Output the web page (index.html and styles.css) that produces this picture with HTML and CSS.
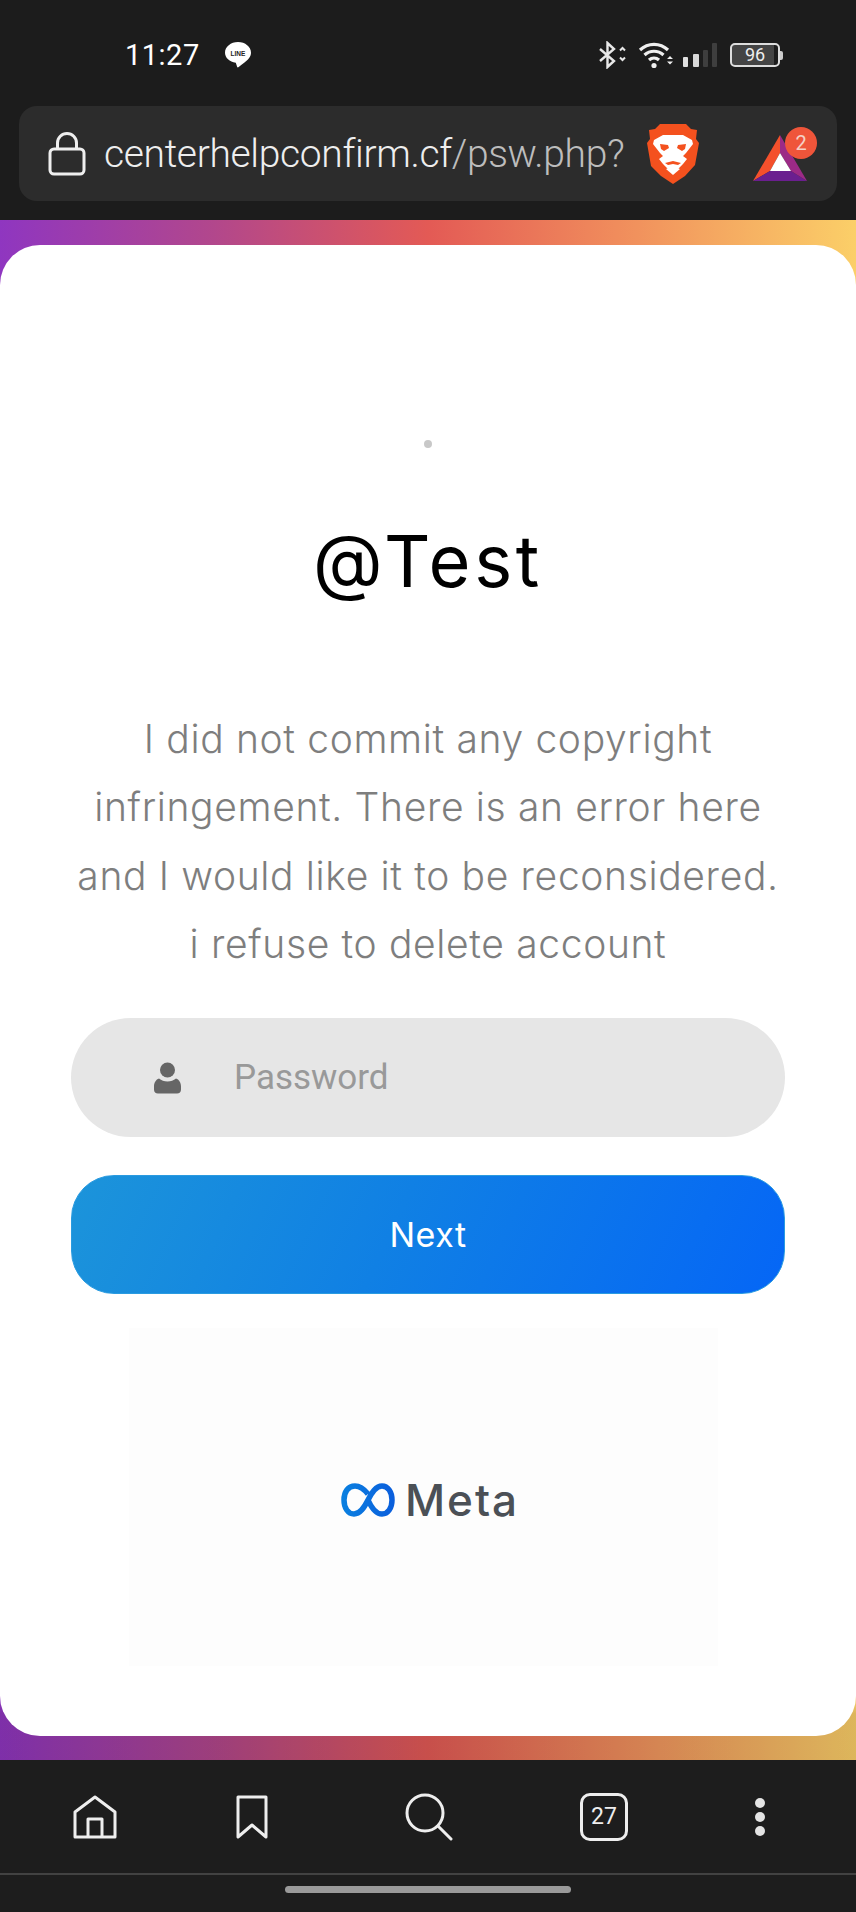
FILE: index.html
```html
<!doctype html>
<html lang="en">
<head>
    <meta charset="utf-8">
    <meta name="viewport" content="width=device-width, initial-scale=1">
    <title>@Test</title>
    <link rel="stylesheet" href="styles.css">
</head>
<body>

<div class="phone">
    <header class="topbar">
        <div class="status">
            <div class="status-left">
                <span class="clock">11:27</span>
                <svg class="line-icon" viewBox="0 0 28 28">
                    <path fill="#fff" d="M14 1C6.800 1 1 5.800 1 11.800c0 5 4.600 9.200 10.800 10l1.400 4.200c.3.600 1 .5 1.500 0 1.800-1.700 3.800-3 5.800-4.500 3.200-2.300 6.500-5.500 6.500-9.700C27 5.800 21.200 1 14 1z"/>
                    <text class="line-word" x="14" y="14.500" text-anchor="middle">LINE</text>
                </svg>
            </div>
            <div class="status-right">
                <svg class="bt-icon" viewBox="0 0 30 28" fill="none" stroke="#e8e8e8" stroke-width="2.400">
                    <path d="M2 8l14 12-6.500 6V2L16 8 2 20"/>
                    <path stroke-width="2" d="M22 10.500l2.500-2.500 2.500 2.500M22 17.500l2.500 2.500 2.500-2.500" transform="translate(0 -1)"/>
                </svg>
                <svg class="wifi-icon" viewBox="0 0 36 28" fill="none" stroke="#efefef" stroke-width="3.200">
                    <path d="M2 9c8-7.500 20-7.500 28 0"/>
                    <path d="M6.500 14c5.500-5 13.500-5 19 0"/>
                    <path d="M11 19c3-2.700 7-2.700 10 0"/>
                    <circle cx="16" cy="24.500" r="2.600" fill="#efefef" stroke="none"/>
                    <path fill="#efefef" stroke="none" d="M29 18h6l-3-3zM29 20.500h6l-3 3z"/>
                </svg>
                <svg class="signal-icon" viewBox="0 0 36 26">
                    <rect x="1" y="15" width="5" height="10" rx="1" fill="#e0e0e0"/>
                    <rect x="11" y="12" width="6" height="13" rx="1" fill="#d8d8d8"/>
                    <rect x="21" y="8" width="5" height="17" rx="1" fill="#3e3e3e"/>
                    <rect x="30" y="1" width="5" height="24" rx="1" fill="#3e3e3e"/>
                </svg>
                <div class="battery">
                    <span class="battery-body">96</span>
                    <span class="battery-tip"></span>
                </div>
            </div>
        </div>

        <div class="urlbar">
            <svg class="lock-icon" viewBox="0 0 38 44" fill="none" stroke="#efefef" stroke-width="3">
                <rect x="2" y="17" width="34" height="25" rx="4"/>
                <path d="M9.500 17v-6a9.500 9.500 0 0 1 19 0v6"/>
            </svg>
            <div class="url"><span class="url-host">centerhelpconfirm.cf</span><span class="url-path">/psw.php?</span></div>
            <svg class="brave-icon" viewBox="0 0 52 62">
                <path fill="#f4511e" d="M13 1h26l5 5 6 1-1 9 3 4-4 22-10 11-12 8-12-8L4 43 0 20l3-4-1-9 6-1z"/>
                <path fill="#fff" d="M7 17l9-5h20l9 5 1 4-7 9-3 3 4 3-4 5-6 6-4-3-4 3-6-6-4-5 4-3-3-3-7-9z"/>
                <path fill="#f4511e" d="M13 21l8 1 1 3-5 3-3-2zM39 21l-8 1-1 3 5 3 3-2z"/>
                <path fill="#f4511e" d="M18 40l8-2 8 2-3 2-5-1-5 1z"/>
                <path fill="#fff" d="M19 46l7-3 7 3-7 6z"/>
            </svg>
            <div class="bat">
                <svg class="bat-icon" viewBox="0 0 54 48">
                    <path fill="#f4502c" d="M0 48L27 2v18L17 38z"/>
                    <path fill="#6a1f8f" d="M0 48h54l-16-10H17z"/>
                    <path fill="#9c2a86" d="M27 2l27 46-16-10-11-18z"/>
                    <path fill="#fff" d="M27 20l11 18H17z"/>
                </svg>
                <span class="bat-badge">2</span>
            </div>
        </div>
    </header>

    <main class="content">
        <section class="card">
            <span class="dot"></span>
            <h1 class="username">@Test</h1>
            <p class="message">I did not commit any copyright<br>infringement. There is an error here<br>and I would like it to be reconsidered.<br>i refuse to delete account</p>

            <form class="login">
                <label class="field">
                    <svg class="user-icon" viewBox="0 0 27 32">
                        <circle cx="13.500" cy="8" r="7.500" fill="#666"/>
                        <path fill="#666" d="M5 16.500c2.500 2 5 3 8.500 3s6-1 8.500-3c3 1 5 4 5 8v3c0 2.500-1.500 4-4 4H4c-2.500 0-4-1.500-4-4v-3c0-4 2-7 5-8z"/>
                    </svg>
                    <input class="field-input" type="password" placeholder="Password">
                </label>
                <button class="next" type="button">Next</button>
            </form>

            <div class="brand">
                <svg class="meta-icon" viewBox="0 0 54 34" fill="none">
                    <defs>
                        <linearGradient id="metaBlue" x1="0" y1="0" x2="1" y2="0">
                            <stop offset="0" stop-color="#0a7fe0"/>
                            <stop offset="1" stop-color="#0a5fdc"/>
                        </linearGradient>
                    </defs>
                    <path stroke="url(#metaBlue)" stroke-width="5.500" d="M27 11C23 6 19 3 14 3 7 3 3 9 3 17c0 8 4 14 10 14 6 0 10-6 14-14s8-14 14-14c6 0 10 6 10 14s-4 14-10 14c-6 0-10-5-14-14"/>
                </svg>
                <span class="meta-word">Meta</span>
            </div>
        </section>
    </main>

    <footer class="navbar">
        <nav class="nav-icons">
            <svg class="nav-home" viewBox="0 0 44 44" fill="none" stroke="#eee" stroke-width="3" stroke-linejoin="round">
                <path d="M2 42V17L22 2l20 15v25z"/>
                <path d="M15 42V24h14v18"/>
            </svg>
            <svg class="nav-bookmark" viewBox="0 0 32 44" fill="none" stroke="#eee" stroke-width="3" stroke-linejoin="round">
                <path d="M2 2h28v40L16 30 2 42z"/>
            </svg>
            <svg class="nav-search" viewBox="0 0 48 48" fill="none" stroke="#eee" stroke-width="3" stroke-linecap="round">
                <circle cx="20" cy="20" r="18"/>
                <path d="M33 33l13 13"/>
            </svg>
            <span class="nav-tabs">27</span>
            <span class="nav-dots"><i></i><i></i><i></i></span>
        </nav>
        <div class="gesture">
            <span class="gesture-pill"></span>
        </div>
    </footer>
</div>

</body>
</html>
```
FILE: styles.css
```css
*, *:before, *:after {
    box-sizing: border-box;
    margin: 0;
    padding: 0;
}

body {
    font-family: "Roboto", "Liberation Sans", sans-serif;
    background: #1d1d1d;
}

.phone {
    display: flex;
    flex-direction: column;
    width: 856px;
    height: 1912px;
    overflow: hidden;
}

/* top chrome */
.topbar {
    height: 220px;
    padding: 0 19px;
    background: #1c1c1c;
}

.status {
    display: flex;
    justify-content: space-between;
    align-items: center;
    height: 106px;
    padding: 4px 54px 0 106px;
    color: #fff;
}

.status-left,
.status-right {
    display: flex;
    align-items: center;
}

.clock {
    font-size: 29px;
    letter-spacing: 0.5px;
}

.line-icon {
    width: 28px;
    height: 28px;
    margin-left: 24px;
}

.line-word {
    font-family: "Liberation Sans", sans-serif;
    font-size: 6.500px;
    font-weight: bold;
    fill: #222;
}

.bt-icon {
    width: 30px;
    height: 28px;
}

.wifi-icon {
    width: 36px;
    height: 28px;
    margin-left: 10px;
}

.signal-icon {
    width: 36px;
    height: 26px;
    margin-left: 8px;
}

.battery {
    display: flex;
    align-items: center;
    margin-left: 12px;
}

.battery-body {
    width: 50px;
    height: 24px;
    border: 2px solid #ddd;
    border-radius: 5px;
    background: linear-gradient(to right, #444 92%, transparent 92%);
    color: #eee;
    font-size: 18px;
    line-height: 20px;
    text-align: center;
}

.battery-tip {
    width: 3px;
    height: 9px;
    border-radius: 0 2px 2px 0;
    background: #ccc;
}

.urlbar {
    display: flex;
    align-items: center;
    height: 95px;
    padding: 0 29px;
    border-radius: 18px;
    background: #2c2c2c;
}

.lock-icon {
    width: 38px;
    height: 44px;
    flex-shrink: 0;
}

.url {
    width: 543px;
    margin-left: 18px;
    font-size: 39px;
    font-weight: 300;
    letter-spacing: -0.35px;
    white-space: nowrap;
}

.url-host {
    color: #eee;
}

.url-path {
    color: #bdbdbd;
}

.brave-icon {
    width: 52px;
    height: 62px;
    flex-shrink: 0;
}

.bat {
    position: relative;
    width: 54px;
    height: 48px;
    margin-left: 54px;
    margin-top: 6px;
    flex-shrink: 0;
}

.bat-icon {
    width: 54px;
    height: 48px;
}

.bat-badge {
    position: absolute;
    top: -6px;
    left: 32px;
    width: 32px;
    height: 32px;
    border-radius: 50%;
    background: #ef553a;
    color: #f5d0c5;
    font-size: 20px;
    line-height: 32px;
    text-align: center;
}

/* page */
.content {
    flex: 1;
    padding: 25px 0 24px;
    background: linear-gradient(to bottom, transparent 96%, rgba(0, 0, 0, 0.12) 97%),
        linear-gradient(to right, #8f36c0 0%, #b2478c 25%, #e35a55 50%, #f08c5c 72%, #fbcf68 100%);
}

.card {
    display: flex;
    flex-direction: column;
    align-items: center;
    height: 100%;
    padding: 195px 71px 0;
    border-radius: 40px;
    background: #fff;
}

.dot {
    width: 8px;
    height: 8px;
    border-radius: 50%;
    background: #c8c8c8;
}

.username {
    margin-top: 64px;
    font-family: "Inter", sans-serif;
    font-size: 72px;
    font-weight: 400;
    letter-spacing: 3.6px;
    line-height: 98px;
    color: #000;
}

.message {
    width: 740px;
    margin-top: 95px;
    font-family: "Inter", sans-serif;
    font-size: 39px;
    font-weight: 300;
    letter-spacing: 0.65px;
    line-height: 68.300px;
    text-align: center;
    color: #7e7e7e;
}

.login {
    display: flex;
    flex-direction: column;
    gap: 38px;
    width: 100%;
    margin-top: 40px;
}

.field {
    display: flex;
    align-items: center;
    height: 119px;
    padding-left: 83px;
    border-radius: 60px;
    background: #e6e6e6;
}

.user-icon {
    width: 27px;
    height: 32px;
    flex-shrink: 0;
}

.field-input {
    flex: 1;
    min-width: 0;
    margin-left: 53px;
    border: none;
    outline: none;
    background: none;
    font-family: "Roboto", sans-serif;
    font-size: 35px;
    color: #555;
}

.field-input::placeholder {
    color: #999;
    opacity: 1;
}

.next {
    height: 119px;
    border: 1px solid #2a9be0;
    border-radius: 43px;
    background: linear-gradient(115deg, #1c94da 0%, #1080e4 45%, #0566f6 100%);
    font-family: "Inter", sans-serif;
    font-size: 34px;
    letter-spacing: 0.5px;
    color: #fff;
}

.brand {
    display: flex;
    justify-content: center;
    align-items: center;
    gap: 10px;
    width: 589px;
    height: 338px;
    margin-top: 34px;
    margin-right: 9px;
    padding: 6px 0 0 13px;
    background: #fdfdfd;
}

.meta-icon {
    width: 54px;
    height: 34px;
}

.meta-word {
    font-family: "Inter", sans-serif;
    font-size: 44px;
    font-weight: 500;
    letter-spacing: 2px;
    color: #4b5056;
}

/* bottom chrome */
.navbar {
    height: 152px;
    background: #1d1d1d;
}

.nav-icons {
    display: grid;
    grid-template-columns: 190px 124px 230px 120px 192px;
    align-items: center;
    justify-items: center;
    height: 115px;
    border-bottom: 2px solid #424242;
}

.nav-home {
    width: 44px;
    height: 44px;
}

.nav-bookmark {
    width: 32px;
    height: 44px;
}

.nav-search {
    width: 48px;
    height: 48px;
}

.nav-tabs {
    width: 48px;
    height: 48px;
    border: 3px solid #eee;
    border-radius: 10px;
    color: #eee;
    font-size: 23px;
    line-height: 42px;
    text-align: center;
}

.nav-dots {
    display: flex;
    flex-direction: column;
    gap: 4px;
}

.nav-dots i {
    width: 10px;
    height: 10px;
    border-radius: 50%;
    background: #e4e4e4;
}

.gesture {
    display: flex;
    justify-content: center;
    padding-top: 11px;
}

.gesture-pill {
    width: 286px;
    height: 7px;
    border-radius: 4px;
    background: #9a9a9a;
}
```
